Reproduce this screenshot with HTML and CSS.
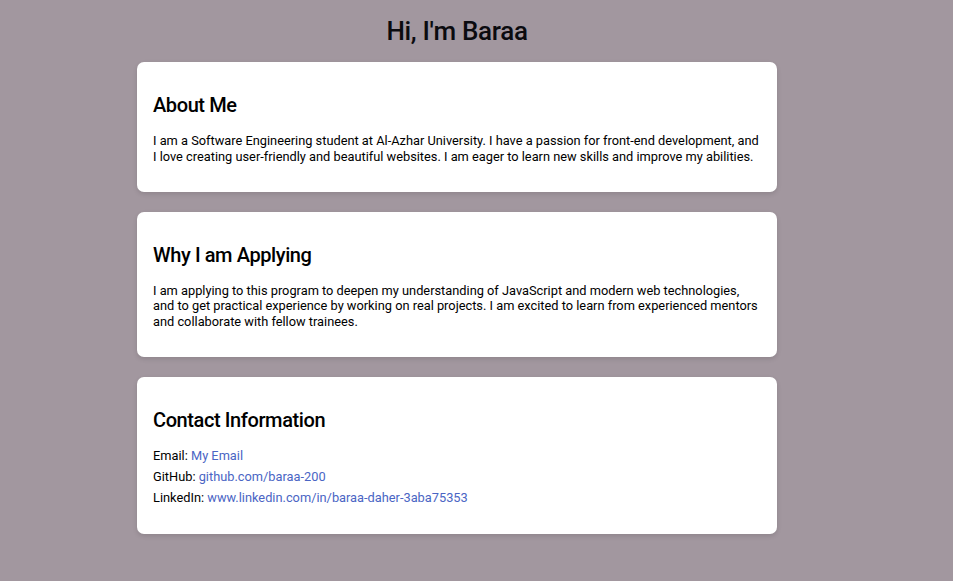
FILE: index.html
```html
<!DOCTYPE html>
<html lang="en">
<head>
<meta charset="utf-8">
<title>Hi, I'm Baraa</title>
<link rel="stylesheet" href="styles.css">
</head>
<body>
<div class="page">
  <h1 class="title">Hi, I'm Baraa</h1>
  <section class="card">
    <h2>About Me</h2>
    <p>I am a Software Engineering student at Al-Azhar University. I have a passion for front-end development, and I love creating user-friendly and beautiful websites. I am eager to learn new skills and improve my abilities.</p>
  </section>
  <section class="card">
    <h2>Why I am Applying</h2>
    <p>I am applying to this program to deepen my understanding of JavaScript and modern web technologies, and to get practical experience by working on real projects. I am excited to learn from experienced mentors and collaborate with fellow trainees.</p>
  </section>
  <section class="card contact">
    <h2>Contact Information</h2>
    <p>Email: <a href="#">My Email</a></p>
    <p>GitHub: <a href="#">github.com/baraa-200</a></p>
    <p>LinkedIn: <a href="#">www.linkedin.com/in/baraa-daher-3aba75353</a></p>
  </section>
</div>
</body>
</html>
```

FILE: styles.css
```css
html, body {
  margin: 0;
  padding: 0;
  background: #a2979f;
}
body {
  font-family: Roboto, "Liberation Sans", sans-serif;
  color: #000;
  min-height: 581px;
}
.page {
  width: 914px;
  display: flex;
  flex-direction: column;
  align-items: center;
  padding-top: 16px;
}
.title {
  font-size: 26px;
  font-weight: 500;
  letter-spacing: -0.3px;
  margin: 0 0 16px;
  line-height: 30px;
  color: #0b0b0f;
}
.card {
  box-sizing: border-box;
  width: 640px;
  background: #fff;
  border-radius: 7px;
  padding: 16px;
  margin-bottom: 20px;
  box-shadow: 0 2px 5px rgba(0,0,0,0.12);
}
.card h2 {
  font-size: 20px;
  font-weight: 500;
  letter-spacing: -0.4px;
  margin: 16px 0 16px;
  line-height: 23px;
}
.card p {
  font-size: 12.8px;
  line-height: 15.5px;
  margin: 0 0 11.5px;
}
.contact p {
  margin: 0 0 5.5px;
}
.contact p:last-child {
  margin-bottom: 13px;
}
.card a {
  color: #4a65c4;
  text-decoration: none;
}
```
